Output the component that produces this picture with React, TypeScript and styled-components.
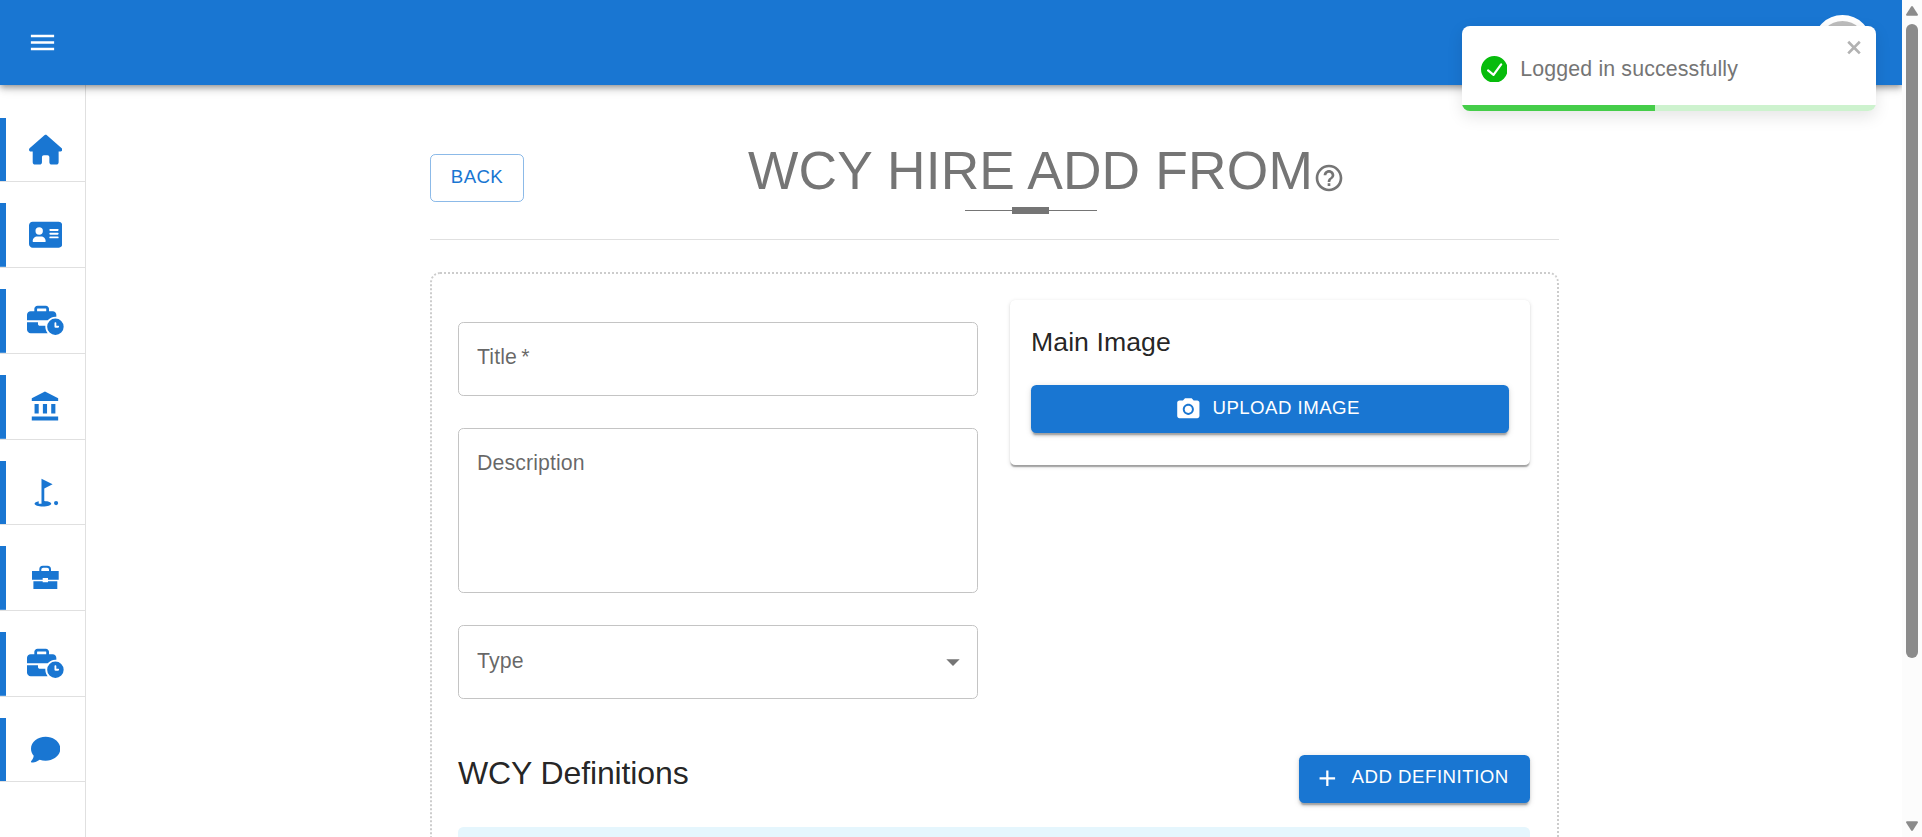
import React from "react";
import styled, { createGlobalStyle } from "styled-components";
import { FaHouse, FaAddressCard, FaBusinessTime, FaComment } from "react-icons/fa6";
import {
  MdGolfCourse,
  MdMenu,
  MdPhotoCamera,
  MdAdd,
  MdArrowDropDown,
  MdHelpOutline,
} from "react-icons/md";

const blue = "#1976d2";
const grey = "#757575";

const GlobalStyle = createGlobalStyle`
  *, *::before, *::after { box-sizing: border-box; }
  body {
    margin: 0;
    background: #fff;
    font-family: "Liberation Sans", Arial, sans-serif;
    color: rgba(0, 0, 0, 0.87);
    overflow: hidden;
  }
  button { font-family: inherit; cursor: pointer; }
  svg { display: block; flex: none; }
`;

const Page = styled.div`
  display: flex;
  height: 837px;
  overflow: hidden;
`;

const Screen = styled.div`
  flex: 1;
  display: flex;
  flex-direction: column;
  overflow: hidden;
`;

const AppBar = styled.header`
  position: relative;
  z-index: 2;
  flex: none;
  display: flex;
  align-items: center;
  justify-content: space-between;
  height: 85px;
  padding: 0 30px 0 27px;
  background: ${blue};
  color: #fff;
  box-shadow: 0 2.7px 5.3px -1.3px rgba(0, 0, 0, 0.26), 0 5.3px 6.7px rgba(0, 0, 0, 0.17),
    0 1.3px 13.3px rgba(0, 0, 0, 0.14);
`;

const Avatar = styled.div`
  width: 59px;
  height: 59px;
  margin-top: 4px;
  border: 6px solid #fff;
  border-radius: 50%;
  background: #bdbdbd;
`;

const Body = styled.div`
  flex: 1;
  display: flex;
  min-height: 0;
`;

const Sidebar = styled.nav`
  flex: none;
  display: flex;
  flex-direction: column;
  gap: 21.15px;
  width: 86px;
  padding-top: 32.75px;
  border-right: 1px solid #e0e0e0;
`;

const NavItem = styled.a`
  flex: none;
  display: flex;
  align-items: center;
  justify-content: center;
  height: 64.6px;
  padding: 0 0 0.5px 5.5px;
  border-bottom: 1px solid #e0e0e0;
  color: ${blue};
  background: linear-gradient(${blue}, ${blue}) left / 6px 100% no-repeat;
`;

const Content = styled.main`
  flex: 1;
  display: flex;
  flex-direction: column;
  padding: 54px 343px 0 344px;
`;

const TitleBar = styled.div`
  flex: none;
  display: flex;
  align-items: flex-start;
  height: 101px;
  border-bottom: 1px solid #e0e0e0;
`;

const BackButton = styled.button`
  width: 94px;
  height: 48px;
  margin-top: 15px;
  padding: 0 0 2px;
  border: 1px solid rgba(25, 118, 210, 0.5);
  border-radius: 5.33px;
  background: transparent;
  color: ${blue};
  font-size: 18.67px;
  letter-spacing: 0.4px;
`;

const Heading = styled.div`
  display: flex;
  margin-left: 224px;
  color: ${grey};
`;

const TitleBlock = styled.div`
  display: flex;
  flex-direction: column;
  align-items: center;
`;

const Title = styled.h1`
  margin: 0;
  font-size: 53.33px;
  font-weight: 400;
  letter-spacing: 0.18px;
  line-height: 64px;
  white-space: nowrap;
`;

const Ornament = styled.div`
  display: flex;
  align-items: center;
  width: 132px;
  height: 7px;
  margin-top: 4px;
  &::before,
  &::after {
    content: "";
    flex: 1;
    height: 1px;
    background: ${grey};
  }
`;

const OrnamentBar = styled.span`
  width: 37px;
  height: 7px;
  background: ${grey};
`;

const HelpIcon = styled(MdHelpOutline)`
  margin: 23px 0 0;
`;

const FormBox = styled.section`
  flex: none;
  display: flex;
  flex-direction: column;
  height: 700px;
  margin-top: 32px;
  padding: 26px 27px 0 26px;
  border: 2px dotted #ccc;
  border-radius: 10px;
`;

const FormGrid = styled.div`
  display: grid;
  grid-template-columns: 520px 520px;
  gap: 32px;
  align-items: start;
`;

const Fields = styled.div`
  display: flex;
  flex-direction: column;
  gap: 32px;
  padding-top: 22px;
`;

const Field = styled.div<{ $height: number; $top?: number }>`
  display: flex;
  justify-content: space-between;
  height: ${(p) => p.$height}px;
  padding: ${(p) => p.$top ?? 19}px 8px 0 18px;
  border: 1px solid #c4c4c4;
  border-radius: 5.33px;
  color: rgba(0, 0, 0, 0.6);
  font-size: 21.33px;
  letter-spacing: 0.1px;
  word-spacing: -1.8px;
  line-height: 30px;
`;

const Card = styled.div`
  height: 165px;
  padding: 21px;
  border-radius: 5.33px;
  background: #fff;
  box-shadow: 0 2.7px 1.3px -1.3px rgba(0, 0, 0, 0.2), 0 1.3px 1.3px rgba(0, 0, 0, 0.14),
    0 1.3px 4px rgba(0, 0, 0, 0.12);
`;

const CardTitle = styled.h2`
  margin: 0 0 21px;
  font-size: 26.67px;
  font-weight: 400;
  line-height: 43px;
  letter-spacing: 0.05px;
`;

const Contained = styled.button<{ $width: number }>`
  display: flex;
  align-items: center;
  justify-content: center;
  gap: 10.7px;
  width: ${(p) => p.$width}px;
  height: 48px;
  padding: 0 5px 0 0;
  border: 0;
  border-radius: 5.33px;
  background: ${blue};
  color: #fff;
  font-size: 18.67px;
  letter-spacing: 0.45px;
  line-height: 46px;
  box-shadow: 0 4px 1.3px -2.7px rgba(0, 0, 0, 0.2), 0 2.7px 2.7px rgba(0, 0, 0, 0.14),
    0 1.3px 6.7px rgba(0, 0, 0, 0.12);
`;

const AddButton = styled(Contained)`
  padding: 0 6px 2px 0;
  letter-spacing: 0.5px;
`;

const ButtonText = styled.span`
  padding-bottom: 2px;
`;

const SectionHead = styled.div`
  display: flex;
  justify-content: space-between;
  margin-top: 56px;
`;

const SectionTitle = styled.h2`
  margin: 0;
  font-size: 32px;
  font-weight: 400;
  letter-spacing: -0.12px;
  line-height: 36px;
`;

const Alert = styled.div`
  height: 66px;
  margin-top: 24px;
  border-radius: 5.33px;
  background: #e5f6fd;
`;

const ScrollTrack = styled.div`
  flex: none;
  display: flex;
  flex-direction: column;
  align-items: center;
  width: 20px;
  padding: 6px 0;
  background: #fcfcfc;
`;

const Thumb = styled.div`
  width: 12px;
  height: 634px;
  margin: 8px 0 auto;
  border-radius: 6px;
  background: #8b8b8b;
`;

const Toast = styled.div`
  position: absolute;
  z-index: 5;
  top: 26px;
  left: 1462px;
  width: 414px;
  height: 85px;
  display: flex;
  flex-direction: column;
  overflow: hidden;
  border-radius: 8px;
  background: #fff;
  box-shadow: 0 5.3px 16px rgba(0, 0, 0, 0.1);
`;

const ToastBody = styled.div`
  flex: 1;
  display: flex;
  align-items: center;
  gap: 13px;
  padding: 7px 12px 0 18.7px;
  color: ${grey};
  font-size: 21.33px;
  letter-spacing: 0.14px;
`;

const CloseIcon = styled.svg`
  align-self: flex-start;
  margin: 4px 0 0 auto;
`;

const Progress = styled.div`
  flex: none;
  height: 6px;
  background: #cdf2ce;
`;

const ProgressValue = styled.div`
  height: 6px;
  background: #45cd49;
`;

function BankIcon() {
  return (
    <svg width="33.33" height="33.33" viewBox="0 0 24 24" fill={blue}>
      <path d="M4 10v7h3v-7H4zm6 0v7h3v-7h-3zM2 22h19v-3H2v3zm14-12v7h3v-7h-3zm-4.5-9L2 6v2h19V6l-9.5-5z" />
    </svg>
  );
}

function BriefcaseIcon() {
  return (
    <svg width="27" height="33" viewBox="0 0 27 33" fill={blue}>
      <path d="M0 10h7.3V8.2Q7.3 4.7 10.8 4.7h4.6Q19 4.7 19 8.2V10h7.7v8.7H16V17h-5.3v1.7H0zM9.3 10H17V8.6Q17 6.7 15 6.7h-3.7Q9.3 6.7 9.3 8.6z" />
      <path d="M1.4 20.3h9.3v1h5.3v-1h9.3V28H1.4z" />
    </svg>
  );
}

const navIcons = [
  <FaHouse size={33.33} />,
  <FaAddressCard size={33.33} />,
  <FaBusinessTime size={36.67} />,
  <BankIcon />,
  <MdGolfCourse size={33.33} />,
  <BriefcaseIcon />,
  <FaBusinessTime size={36.67} />,
  <FaComment size={29.33} />,
];

export default function App() {
  const progress = 46.6;
  return (
    <Page>
      <GlobalStyle />
      <Screen>
        <AppBar>
          <MdMenu size={31} />
          <Avatar />
        </AppBar>
        <Body>
          <Sidebar>
            {navIcons.map((icon, i) => (
              <NavItem key={i}>{icon}</NavItem>
            ))}
          </Sidebar>
          <Content>
            <TitleBar>
              <BackButton>BACK</BackButton>
              <Heading>
                <TitleBlock>
                  <Title>WCY HIRE ADD FROM</Title>
                  <Ornament>
                    <OrnamentBar />
                  </Ornament>
                </TitleBlock>
                <HelpIcon size={32} />
              </Heading>
            </TitleBar>
            <FormBox>
              <FormGrid>
                <Fields>
                  <Field $height={74}>Title *</Field>
                  <Field $height={165}>Description</Field>
                  <Field $height={74} $top={20}>
                    Type
                    <MdArrowDropDown size={32} color={grey} />
                  </Field>
                </Fields>
                <Card>
                  <CardTitle>Main Image</CardTitle>
                  <Contained $width={478}>
                    <MdPhotoCamera size={26.67} />
                    <ButtonText>UPLOAD IMAGE</ButtonText>
                  </Contained>
                </Card>
              </FormGrid>
              <SectionHead>
                <SectionTitle>WCY Definitions</SectionTitle>
                <AddButton $width={231}>
                  <MdAdd size={26.67} />
                  <ButtonText>ADD DEFINITION</ButtonText>
                </AddButton>
              </SectionHead>
              <Alert />
            </FormBox>
          </Content>
        </Body>
      </Screen>
      <ScrollTrack>
        <svg width="12" height="10" viewBox="0 0 12 10" fill="#8b8b8b">
          <path d="M5 .8Q6-.6 7 .8l4.8 7.4q.6 1.5-1 1.5H1.2q-1.6 0-1-1.5z" />
        </svg>
        <Thumb />
        <svg width="12" height="10" viewBox="0 0 12 10" fill="#8b8b8b">
          <path d="M5 9.2q1 1.4 2 0l4.8-7.4q.6-1.5-1-1.5H1.2q-1.6 0-1 1.5z" />
        </svg>
      </ScrollTrack>
      <Toast>
        <ToastBody>
          <svg width="26.67" height="26.67" viewBox="0 0 24 24" fill="#07bc0c">
            <path d="M12 0a12 12 0 1012 12A12.014 12.014 0 0012 0zm6.927 8.2l-6.845 9.289a1.011 1.011 0 01-1.43.188l-4.888-3.908a1 1 0 111.25-1.562l4.076 3.261 6.227-8.451a1 1 0 111.61 1.183z" />
          </svg>
          Logged in successfully
          <CloseIcon width="18" height="20.6" viewBox="0 0 14 16" fill="#b2b2b2">
            <path
              fillRule="evenodd"
              d="M7.71 8.23l3.75 3.75-1.48 1.48-3.75-3.75-3.75 3.75L1 11.98l3.75-3.75L1 4.48 2.48 3l3.75 3.75L9.98 3l1.48 1.48-3.75 3.75z"
            />
          </CloseIcon>
        </ToastBody>
        <Progress>
          <ProgressValue style={{ width: `${progress}%` }} />
        </Progress>
      </Toast>
    </Page>
  );
}
